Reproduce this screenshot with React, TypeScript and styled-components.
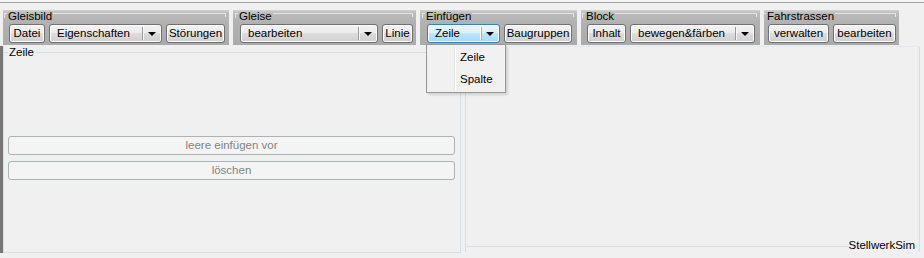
import React from 'react';
import styled, { createGlobalStyle, css } from 'styled-components';

const GlobalStyle = createGlobalStyle`
	html, body {
		margin: 0;
		padding: 0;
		background: #f0f0f0;
	}
	* {
		box-sizing: border-box;
	}
`;

const Window = styled.div`
	width: 924px;
	height: 258px;
	overflow: hidden;
	background: #f0f0f0;
	font-family: 'Liberation Sans', Arial, sans-serif;
	font-size: 11px;
	color: #000;
	display: flex;
	flex-direction: column;
`;

const TopRule = styled.div`
	height: 4px;
	border-bottom: 1px solid #a5a5a5;
	background: #f4f4f4;
	margin-top: -1px;
`;

const Toolbar = styled.div`
	display: flex;
	gap: 4px;
	padding: 7px 0 0 3px;
`;

const Group = styled.div<{ $width: number; $pad: number }>`
	width: ${(p) => p.$width}px;
	height: 35px;
	padding: 0 3px 2px ${(p) => p.$pad - 1}px;
	display: flex;
	flex-direction: column;
	background: linear-gradient(#d2d2d2 0, #bcbcbc 3px, #b2b2b2 12px, #aaaaaa 100%);
`;

const TitleRow = styled.div`
	display: flex;
	height: 14px;
	align-items: flex-start;
	margin-left: -4px;
`;

const Corner = styled.div`
	width: 3px;
	height: 5px;
	margin-top: 3px;
	border-top: 1px solid #e4e4e4;
	border-left: 1px solid #e4e4e4;
`;

const Caption = styled.span`
	line-height: 13px;
	padding: 0 1px;
	white-space: nowrap;
	font-size: 11.5px;
`;

const Rule = styled.div`
	flex: 1;
	height: 4px;
	margin-top: 3px;
	border-top: 1px solid #e4e4e4;
	border-right: 1px solid #e4e4e4;
`;

const ButtonRow = styled.div`
	display: flex;
	gap: 4px;
	margin-left: 1px;
`;

const buttonFace = css`
	height: 19px;
	border: 1px solid #707070;
	border-radius: 3px;
	background: linear-gradient(#f2f2f2 0%, #ebebeb 50%, #dddddd 50%, #cfcfcf 100%);
	box-shadow: inset 0 0 0 1px #fbfbfb;
	font: inherit;
	font-size: 11.5px;
	line-height: 17px;
	color: #000;
	white-space: nowrap;
`;

const ToolButton = styled.div<{ $width: number }>`
	${buttonFace};
	width: ${(p) => p.$width}px;
	text-align: center;
`;

const ComboWrap = styled.div`
	position: relative;
`;

const Combo = styled.div<{ $width: number; $active?: boolean }>`
	${buttonFace};
	width: ${(p) => p.$width}px;
	display: flex;
	${(p) =>
		p.$active &&
		css`
			border-color: #3c7fb1;
			background: linear-gradient(#eaf6fd 0%, #d9f0fc 50%, #bee6fd 50%, #a7d9f5 100%);
		`}
`;

const ComboText = styled.div`
	flex: 1;
	padding-left: 7px;
`;

const ComboArrow = styled.div<{ $active?: boolean }>`
	width: 19px;
	display: flex;
	align-items: center;
	justify-content: center;
	border-left: 1px solid ${(p) => (p.$active ? '#ffffff' : '#9a9a9a')};
	box-shadow: inset 1px 0 0 ${(p) => (p.$active ? '#8dbcdc' : '#f6f6f6')};
	margin: 2px 0;

	&::after {
		content: '';
		border-left: 4px solid transparent;
		border-right: 4px solid transparent;
		border-top: 4px solid #000;
	}
`;

const Menu = styled.div`
	position: absolute;
	top: 20px;
	left: -1px;
	width: 80px;
	height: 49px;
	padding: 2px;
	background: #f1f1f1;
	border: 1px solid #979797;
	box-shadow: 2px 2px 2px rgba(0, 0, 0, 0.12);
	z-index: 5;
	display: flex;
	flex-direction: column;
	background-image: linear-gradient(
		to right,
		transparent 27px,
		#e2e3e3 27px,
		#e2e3e3 28px,
		#ffffff 28px,
		#ffffff 29px,
		transparent 29px
	);
	background-size: 100% 43px;
	background-position: 0 2px;
	background-repeat: no-repeat;
`;

const MenuItem = styled.div`
	height: 22px;
	line-height: 20px;
	padding-left: 31px;
	font-size: 11.5px;
`;

const Main = styled.div`
	display: flex;
	gap: 4px;
	margin-top: 1px;
	height: 207px;
	border-left: 3px solid #767676;
`;

const Panel = styled.div<{ $width: number }>`
	width: ${(p) => p.$width}px;
	display: flex;
	flex-direction: column;
	border-left: 1px solid #d6dfe6;
	border-right: 1px solid #d6dfe6;
`;

const LeftPanel = styled(Panel)`
	border-bottom: 1px solid #d6dfe6;
`;

const PanelTitle = styled.div`
	display: flex;
	height: 13px;
	align-items: flex-start;
	margin: 0 -1px;
`;

const PanelCorner = styled.div<{ $width: number }>`
	width: ${(p) => p.$width}px;
	margin-top: 6px;
	border-top: 1px solid #d6dfe6;
`;

const PanelCaption = styled.span`
	line-height: 13px;
	padding: 0 1px;
	white-space: nowrap;
	font-size: 11.5px;
`;

const PanelRule = styled.div`
	flex: 1;
	margin-top: 6px;
	border-top: 1px solid #d6dfe6;
`;

const PanelBody = styled.div`
	flex: 1;
	display: flex;
	flex-direction: column;
	gap: 6px;
	padding: 77px 5px 0 4px;
`;

const DisabledButton = styled.div`
	height: 19px;
	border: 1px solid #adb2b5;
	border-radius: 3px;
	background: #f4f4f4;
	color: #838383;
	text-align: center;
	line-height: 17px;
	font-size: 11.5px;
`;

const RightPanel = styled(Panel)`
	height: 206px;
	border-top: 1px solid #e4e9ed;
	border-radius: 2px 2px 0 0;
	justify-content: flex-end;
`;

const BottomTitle = styled.div`
	display: flex;
	align-items: center;
	height: 13px;
	margin: 0 -1px 0 -1px;
`;

const BottomRule = styled.div<{ $width?: number }>`
	${(p) => (p.$width ? `width: ${p.$width}px;` : 'flex: 1;')}
	margin-top: 1px;
	border-top: 1px solid #d6dfe6;
`;

type ComboProps = {
	width: number;
	label: string;
	active?: boolean;
	children?: React.ReactNode;
};

function ComboBox({ width, label, active, children }: ComboProps) {
	return (
		<ComboWrap>
			<Combo $width={width} $active={active}>
				<ComboText>{label}</ComboText>
				<ComboArrow $active={active} />
			</Combo>
			{children}
		</ComboWrap>
	);
}

type ToolGroupProps = {
	title: string;
	width: number;
	pad: number;
	children: React.ReactNode;
};

function ToolGroup({ title, width, pad, children }: ToolGroupProps) {
	return (
		<Group $width={width} $pad={pad}>
			<TitleRow>
				<Corner />
				<Caption>{title}</Caption>
				<Rule />
			</TitleRow>
			<ButtonRow>{children}</ButtonRow>
		</Group>
	);
}

export default function App() {
	return (
		<>
			<GlobalStyle />
			<Window>
				<TopRule />
				<Toolbar>
					<ToolGroup title="Gleisbild" width={226} pad={6}>
						<ToolButton $width={36}>Datei</ToolButton>
						<ComboBox width={113} label="Eigenschaften" />
						<ToolButton $width={59}>Störungen</ToolButton>
					</ToolGroup>
					<ToolGroup title="Gleise" width={183} pad={7}>
						<ComboBox width={138} label="bearbeiten" />
						<ToolButton $width={31}>Linie</ToolButton>
					</ToolGroup>
					<ToolGroup title="Einfügen" width={157} pad={7}>
						<ComboBox width={73} label="Zeile" active>
							<Menu>
								<MenuItem>Zeile</MenuItem>
								<MenuItem>Spalte</MenuItem>
							</Menu>
						</ComboBox>
						<ToolButton $width={68}>Baugruppen</ToolButton>
					</ToolGroup>
					<ToolGroup title="Block" width={179} pad={6}>
						<ToolButton $width={39}>Inhalt</ToolButton>
						<ComboBox width={125} label="bewegen&färben" />
					</ToolGroup>
					<ToolGroup title="Fahrstrassen" width={135} pad={4}>
						<ToolButton $width={61}>verwalten</ToolButton>
						<ToolButton $width={63}>bearbeiten</ToolButton>
					</ToolGroup>
				</Toolbar>
				<Main>
					<LeftPanel $width={458}>
						<PanelTitle>
							<PanelCorner $width={5} />
							<PanelCaption>Zeile</PanelCaption>
							<PanelRule />
						</PanelTitle>
						<PanelBody>
							<DisabledButton>leere einfügen vor</DisabledButton>
							<DisabledButton>löschen</DisabledButton>
						</PanelBody>
					</LeftPanel>
					<RightPanel $width={455}>
						<BottomTitle>
							<BottomRule />
							<PanelCaption>StellwerkSim</PanelCaption>
							<BottomRule $width={4} />
						</BottomTitle>
					</RightPanel>
				</Main>
			</Window>
		</>
	);
}
